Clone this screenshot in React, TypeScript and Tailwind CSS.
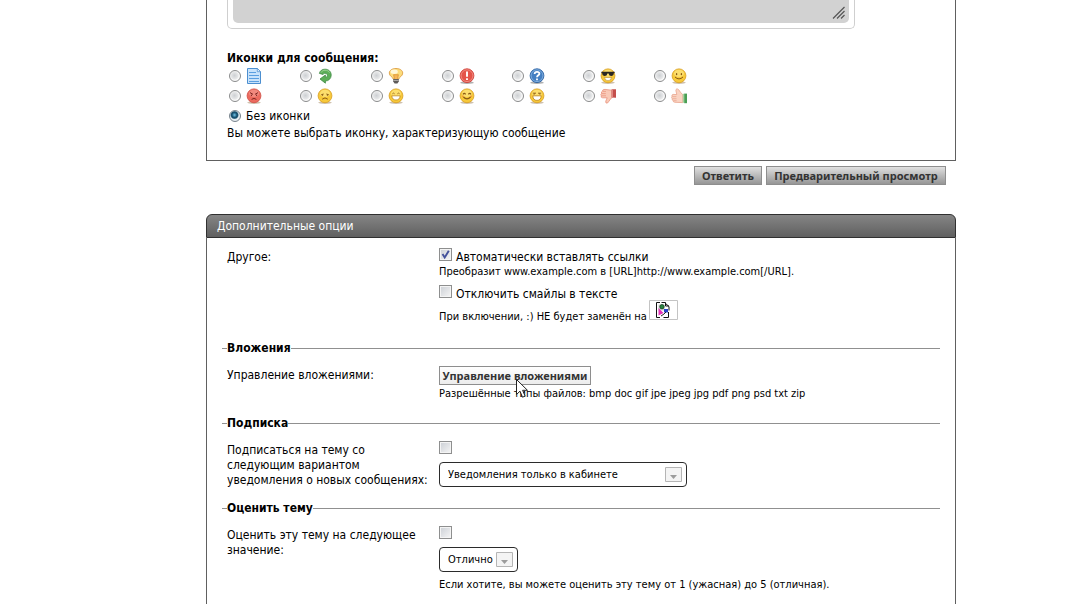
import { useState } from 'react';
import type { ReactNode } from 'react';

type Mood = 'angry' | 'sad' | 'grin' | 'blush' | 'laugh' | 'cool' | 'smile';

function Face({ mood }: { mood: Mood }) {
  const red = mood === 'angry';
  const ink = red ? '#7c2420' : '#8a5a14';

  return (
    <svg viewBox="0 0 16 16" className="h-4 w-4">
      <ellipse cx="8" cy="14.6" rx="6.8" ry="1.3" fill="#b9a58c" opacity="0.7" />
      <circle cx="8" cy="7.8" r="6.9" fill={red ? '#ec6a5e' : '#f7c93a'} stroke={red ? '#d2554c' : '#dba428'} strokeWidth="0.9" />
      <ellipse cx="8" cy="5.4" rx="5" ry="3.6" fill={red ? '#f4978c' : '#fde783'} opacity="0.7" />
      {mood === 'angry' && (
        <g stroke={ink} fill="none" strokeWidth="1">
          <path d="M4 4.6 7 6.4M12 4.6 9 6.4M5.6 11.4Q8 9.4 10.4 11.4" />
          <path d="M5.4 6.6v1.4M10.6 6.6v1.4" />
        </g>
      )}
      {mood === 'sad' && (
        <g stroke={ink} fill="none" strokeWidth="1">
          <path d="M4.2 6.8 6.6 6M11.8 6.8 9.4 6M5.2 11.2Q8 8.6 10.8 11.2" />
          <path d="M5.6 6.6v1.2M10.4 6.6v1.2" />
        </g>
      )}
      {mood === 'grin' && (
        <g stroke={ink} strokeWidth="0.8">
          <path d="M4.4 5.8Q5.5 4.4 6.6 5.8M9.4 5.8Q10.5 4.4 11.6 5.8" fill="none" />
          <path d="M3.8 7.8h8.4Q11.8 12 8 12T3.8 7.8z" fill="#fff" stroke="#c28c22" />
        </g>
      )}
      {mood === 'blush' && (
        <g stroke={ink} fill="none" strokeWidth="1.1">
          <path d="M4 6.4Q5.3 4.4 6.6 6.4M9.4 6.4Q10.7 4.4 12 6.4M4.4 9Q8 12.8 11.6 9" />
          <path d="M3 8.2h1.8M11.2 8.2H13" stroke="#ef8a3c" />
        </g>
      )}
      {mood === 'laugh' && (
        <g stroke={ink} strokeWidth="0.9">
          <path d="M3.8 5.2h2.8L4.6 6.6M12.2 5.2H9.4l2 1.4" fill="none" />
          <path d="M3.8 7.8h8.4Q12 12.4 8 12.4T3.8 7.8z" fill="#fff" stroke="#c28c22" />
        </g>
      )}
      {mood === 'cool' && (
        <g>
          <path d="M1.4 3.8h13.2v1.1l-.8.4Q13.6 8 11.2 8 9 8 8.6 5.4H7.4Q7 8 4.8 8 2.4 8 2.2 5.3l-.8-.4z" fill="#2b2722" />
          <path d="M4.4 9.4h7.2Q11 12.8 8 12.8T4.4 9.4z" fill="#fff" stroke="#b98722" strokeWidth="0.6" />
        </g>
      )}
      {mood === 'smile' && (
        <g>
          <ellipse cx="5.6" cy="6.2" rx="0.7" ry="1.1" fill={ink} />
          <ellipse cx="10.4" cy="6.2" rx="0.7" ry="1.1" fill={ink} />
          <path d="M4 9Q8 12.8 12 9" fill="none" stroke={ink} strokeWidth="1" />
        </g>
      )}
    </svg>
  );
}

function PostIcon() {
  return (
    <svg viewBox="0 0 16 16" className="h-4 w-4">
      <path d="M1.5.5h9.8l3.2 3.2v11.8h-13z" fill="#c9e3fb" stroke="#4c8fd0" />
      <path d="M11.3.5v3.2h3.2z" fill="#fff" stroke="#4c8fd0" strokeWidth="0.8" />
      <path d="M3 4.5h7M3 7.5h10M3 10.5h10M3 13.5h10" stroke="#5b9fe0" />
    </svg>
  );
}

function ArrowIcon() {
  return (
    <svg viewBox="0 0 16 16" className="h-4 w-4">
      <path
        d="M2.4 5.4C3 2.5 5.4 1.2 8 1.2c3.800 0 6.200 2.600 6.200 5.900 0 3.400-2.600 5.900-5.800 5.900v2.200L3 11l5.400-4v2.300c1.300 0 2-.8 2-1.900C10.400 6 9.300 5.300 8 5.300c-1.200 0-1.700.6-1.900 1.200z"
        fill="#5cae58"
        stroke="#3f8a44"
        strokeWidth="0.8"
      />
      <path d="M4 4.600C5 2.900 6.400 2.200 8 2.200c2 0 3.600.8 4.500 2.400" fill="none" stroke="#a3d69a" strokeWidth="0.9" />
    </svg>
  );
}

function BulbIcon() {
  return (
    <svg viewBox="0 0 16 16" className="h-4 w-4">
      <path d="M5.200 11C5 9 1.300 8.300 1.300 5.100 1.300 2.300 4.300.5 8 .5s6.700 1.800 6.700 4.600c0 3.200-3.700 3.900-3.900 5.900z" fill="#fcdc7c" stroke="#dd9d42" strokeWidth="0.9" />
      <ellipse cx="6.2" cy="3.8" rx="3.6" ry="2.2" fill="#fff7d8" />
      <path d="M6.400 10.800 5.600 6.700h4.800l-.8 4.100" fill="#f6b65a" stroke="#d98d2b" strokeWidth="0.7" />
      <path d="M5.200 11h5.600v2.600l-1.400 1.900H6.600l-1.400-1.900z" fill="#5d5a58" />
      <path d="M5.400 12.400h5.200" stroke="#c9c7c4" strokeWidth="0.8" />
    </svg>
  );
}

function Badge({ kind }: { kind: 'alert' | 'question' }) {
  const alert = kind === 'alert';

  return (
    <svg viewBox="0 0 16 16" className="h-4 w-4">
      <ellipse cx="8" cy="14.7" rx="6.8" ry="1.2" fill="#8d8d8d" opacity="0.7" />
      <circle cx="8" cy="7.7" r="6.9" fill={alert ? '#e4544a' : '#447fc2'} stroke={alert ? '#d0443d' : '#2f64a4'} strokeWidth="0.9" />
      <circle cx="8" cy="7.7" r="5.9" fill="none" stroke={alert ? '#f2958b' : '#8db7e2'} strokeWidth="0.8" />
      {alert ? (
        <path d="M8 3.400v5.400M8 10.200v1.900" stroke="#fff" strokeWidth="1.9" />
      ) : (
        <path d="M5.600 6Q5.700 3.800 8 3.800t2.400 1.900C10.400 7.200 8 7.400 8 9.200M8 10.400v1.800" fill="none" stroke="#fff" strokeWidth="1.8" />
      )}
    </svg>
  );
}

function ThumbIcon({ down = false }: { down?: boolean }) {
  if (down) {
    return (
      <svg viewBox="0 0 16 16" className="h-4 w-4">
        <path d="M11.500 2.200 5 1.400Q2.600 1.200 2.500 3 .8 3.800 1.600 5.300.2 6.500 1.300 7.800.6 9.600 2.600 9.800h4.600C6.300 12 5 14 6.200 15q1.300.7 2.300-1.200c1-1.900 2.600-3 3.500-4.400z" fill="#f9c9b6" stroke="#e8917b" strokeWidth="0.8" />
        <path d="M2.500 3.400H6M1.800 5.600h4M1.600 7.800H6" stroke="#e8917b" strokeWidth="0.7" />
        <path d="M11.700 1.200h4.300v8.600l-4.300-.4z" fill="#c44e4b" />
        <path d="M11.700 1.200h1.300v8.400l-1.300-.2z" fill="#df8680" />
      </svg>
    );
  }

  return (
    <svg viewBox="0 0 16 16" className="h-4 w-4">
      <path d="M11.800 6.800C10 5.400 9 3.300 7.500 1.500 6.300.4 4.600.9 4.900 2.600l.9 4L2 6.400Q.4 6.800 1 8.400q-.9 1.200.2 2.200-.5 1.400.9 2-.1 1.500 1.700 1.700l8 .3z" fill="#fad3c2" stroke="#e8a38c" strokeWidth="0.8" />
      <path d="M1.400 8.600h4M1.500 10.700h4M2.300 12.700h3.300" stroke="#e8a38c" strokeWidth="0.7" />
      <path d="M11.800 5.800h1.500v9h-1.500z" fill="#a5d19d" />
      <path d="M13.200 5.600H16v9.600h-2.800z" fill="#4a9f54" />
    </svg>
  );
}

interface IconOption {
  name: string;
  icon: ReactNode;
}

const iconOptions: IconOption[] = [
  { name: 'Документ', icon: <PostIcon /> },
  { name: 'Стрелка', icon: <ArrowIcon /> },
  { name: 'Лампочка', icon: <BulbIcon /> },
  { name: 'Восклицание', icon: <Badge kind="alert" /> },
  { name: 'Вопрос', icon: <Badge kind="question" /> },
  { name: 'Круто', icon: <Face mood="cool" /> },
  { name: 'Улыбка', icon: <Face mood="smile" /> },
  { name: 'Злость', icon: <Face mood="angry" /> },
  { name: 'Печаль', icon: <Face mood="sad" /> },
  { name: 'Радость', icon: <Face mood="grin" /> },
  { name: 'Смущение', icon: <Face mood="blush" /> },
  { name: 'Смех', icon: <Face mood="laugh" /> },
  { name: 'Плохо', icon: <ThumbIcon down /> },
  { name: 'Хорошо', icon: <ThumbIcon /> },
];

const radioClass =
  'h-3 w-3 shrink-0 appearance-none rounded-full border border-[#8a8b8c] bg-[radial-gradient(circle_at_45%_45%,#cdd0d3_0,#e6e7e8_45%,#fafafa_60%)] checked:border-[#77828c] checked:bg-[radial-gradient(circle_at_45%_40%,#6fc3ea_0,#17506f_30%,#17506f_40%,#e8eef2_55%)]';

const buttonClass =
  'h-[19px] border border-[#8e8e8e] font-["Noto_Sans","DejaVu_Sans",sans-serif] text-[11px] leading-4 font-bold whitespace-nowrap text-[#333]';

interface CheckboxProps {
  id: string;
  label?: string;
  hint?: string;
  defaultChecked?: boolean;
}

function Checkbox({ id, label, hint, defaultChecked }: CheckboxProps) {
  return (
    <div className="flex h-[15px] items-start gap-1">
      <span className="grid h-[13px] w-[13px] shrink-0">
        <input
          id={id}
          type="checkbox"
          aria-label={hint}
          defaultChecked={defaultChecked}
          className="peer col-start-1 row-start-1 h-[13px] w-[13px] appearance-none border border-[#8e8f8f] bg-linear-to-br from-[#cbcfd5] to-[#f6f6f6] shadow-[inset_0_0_0_1px_#f4f4f4]"
        />
        <svg viewBox="0 0 13 13" className="pointer-events-none invisible col-start-1 row-start-1 h-[13px] w-[13px] peer-checked:visible">
          <path d="M3.500 6 5.700 9.500 9.800 2.800" fill="none" stroke="#43519b" strokeWidth="1.9" />
        </svg>
      </span>
      {label && <label htmlFor={id} className="mt-0.5">{label}</label>}
    </div>
  );
}

interface SelectProps {
  label: string;
  options: string[];
  className: string;
}

function Select({ label, options, className }: SelectProps) {
  return (
    <div className={`relative h-[25px] max-w-full ${className}`}>
      <select
        aria-label={label}
        className="h-full w-full appearance-none rounded border border-[#2b2b2b] bg-white pl-2 text-[11px] text-black"
      >
        {options.map(option => (
          <option key={option}>{option}</option>
        ))}
      </select>
      <svg viewBox="0 0 17 15" className="pointer-events-none absolute top-[5px] right-[5px] h-[15px] w-[17px]">
        <path d="M.5.5h16v14H.5z" fill="#f4f4f4" stroke="#b5b5b5" />
        <path d="M5 8h7l-3.500 4z" fill="#9c9c9c" />
      </svg>
    </div>
  );
}

function Section({ title, children }: { title: string; children: ReactNode }) {
  return (
    <fieldset className="mx-[15px] border-t border-[#909090] pb-[13px]">
      <legend className="ml-[5px] font-bold">{title}</legend>
      <div className="pt-2.5">{children}</div>
    </fieldset>
  );
}

function Row({ label, children }: { label: string; children: ReactNode }) {
  return (
    <div className="grid grid-cols-[212px_1fr] pl-[5px]">
      <div className="pt-0.5 pr-1.5">{label}</div>
      <div>{children}</div>
    </div>
  );
}

export default function App() {
  const [selected, setSelected] = useState('none');

  return (
    <main className='flex min-h-screen flex-col bg-white pr-[136px] pl-[206px] font-["DejaVu_Sans_Condensed","DejaVu_Sans",sans-serif] text-[12px] leading-[15px] text-black'>
      <section className="border-x border-b border-[#606060] px-5 pb-[19px]">
        <div className="mr-20 rounded-b-[5px] border-x border-b border-[#cfcfcf] px-[5px] pb-[5px]">
          <div className="relative">
            <textarea aria-label="Сообщение" className="block h-[23px] w-full resize-none rounded-b-[5px] bg-[#d2d2d2]" />
            <svg viewBox="0 0 13 13" className="pointer-events-none absolute right-1 bottom-1 h-[13px] w-[13px]">
              <path d="M1 12.500 12.500 1M5 12.500 12.500 5M9 12.500 12.500 9" stroke="#555" strokeWidth="1.2" />
            </svg>
          </div>
        </div>

        <div className="mt-[22px] font-bold">Иконки для сообщения:</div>
        <div className="grid w-[496px] max-w-full grid-cols-7">
          {iconOptions.map(option => (
            <label key={option.name} className="flex h-5 items-center gap-[5px] pl-0.5">
              <input
                type="radio"
                name="post-icon"
                aria-label={option.name}
                checked={selected === option.name}
                onChange={() => setSelected(option.name)}
                className={radioClass}
              />
              {option.icon}
            </label>
          ))}
        </div>
        <label className="flex h-5 w-fit items-center gap-[5px] pl-0.5">
          <input
            type="radio"
            name="post-icon"
            checked={selected === 'none'}
            onChange={() => setSelected('none')}
            className={radioClass}
          />
          Без иконки
        </label>
        <p>Вы можете выбрать иконку, характеризующую сообщение</p>
      </section>

      <div className="mt-[5px] flex justify-end gap-1 pr-2.5">
        <button type="submit" className={`${buttonClass} w-[68px] bg-linear-to-b from-[#e0e0e0] to-[#969696]`}>
          Ответить
        </button>
        <button type="button" className={`${buttonClass} w-[180px] bg-linear-to-b from-[#e0e0e0] to-[#969696]`}>
          Предварительный просмотр
        </button>
      </div>

      <h2 className="mt-[29px] h-6 rounded-t-[6px] border border-[#303030] bg-linear-to-b from-[#858585] to-[#606060] px-2.5 pt-1 text-white">
        Дополнительные опции
      </h2>

      <section className="flex-1 border-x border-[#606060]">
        <div className="px-[15px] pt-2.5 pb-[17px]">
          <Row label="Другое:">
            <div className="flex flex-col items-start">
              <Checkbox id="auto-links" label="Автоматически вставлять ссылки" defaultChecked />
              <p className="mt-px text-[11px]">Преобразит www.example.com в [URL]http://www.example.com[/URL].</p>
              <div className="mt-1.5">
                <Checkbox id="no-smilies" label="Отключить смайлы в тексте" />
              </div>
              <div className="flex items-baseline gap-0.5 text-[11px]">
                <span>При включении, :) НЕ будет заменён на</span>
                <svg viewBox="0 0 29 20" role="img" aria-label="Смайл" className="h-5 w-[29px]">
                  <path d="M.5.5h28v19H.5z" fill="#fff" stroke="#c4c4c4" />
                  <path d="M11 2.500H7.500v15H11M12.500 2.500h4v3.500h3.500M15.500 2.500l4.500 4v4M19.500 12v5.500h-5" fill="none" stroke="#111" />
                  <path d="M9.500 4.500h6v6h-6z" fill="#ccc" />
                  <path d="M9.500 8v7.500l5-2.500z" fill="#e431b8" />
                  <circle cx="13" cy="6.7" r="2.2" fill="#26843c" stroke="#12351b" strokeWidth="0.7" />
                  <path d="M15 9h4v3.500h-4z" fill="#2741c7" />
                  <path d="M12 16l3-2 2-2" stroke="#222" fill="none" />
                </svg>
              </div>
            </div>
          </Row>
        </div>

        <Section title="Вложения">
          <Row label="Управление вложениями:">
            <div className="relative w-fit">
              <button type="button" className={`${buttonClass} block w-[152px] bg-linear-to-b from-white to-[#ececec]`}>
                Управление вложениями
              </button>
              <svg viewBox="0 0 14 21" className="pointer-events-none absolute top-3 left-[76px] z-10 h-[21px] w-[14px]">
                <path d="M1.500 1.500v15l3.500-3.300 2.500 6 2.600-1.100-2.500-5.800h4.900z" fill="#fff" stroke="#222" />
              </svg>
            </div>
            <p className="mt-px pb-0.5 text-[11px]">Разрешённые типы файлов: bmp doc gif jpe jpeg jpg pdf png psd txt zip</p>
          </Row>
        </Section>

        <Section title="Подписка">
          <Row label="Подписаться на тему со следующим вариантом уведомления о новых сообщениях:">
            <Checkbox id="subscribe" hint="Подписаться на тему" />
            <div className="pt-1.5">
              <Select label="Вариант уведомления" options={['Уведомления только в кабинете']} className="w-[248px]" />
            </div>
          </Row>
        </Section>

        <Section title="Оценить тему">
          <Row label="Оценить эту тему на следующее значение:">
            <Checkbox id="rate" hint="Оценить тему" />
            <div className="pt-1.5">
              <Select label="Оценка" options={['Отлично']} className="w-[79px]" />
            </div>
            <p className="mt-[5px] text-[11px]">Если хотите, вы можете оценить эту тему от 1 (ужасная) до 5 (отличная).</p>
          </Row>
        </Section>
      </section>
    </main>
  );
}
